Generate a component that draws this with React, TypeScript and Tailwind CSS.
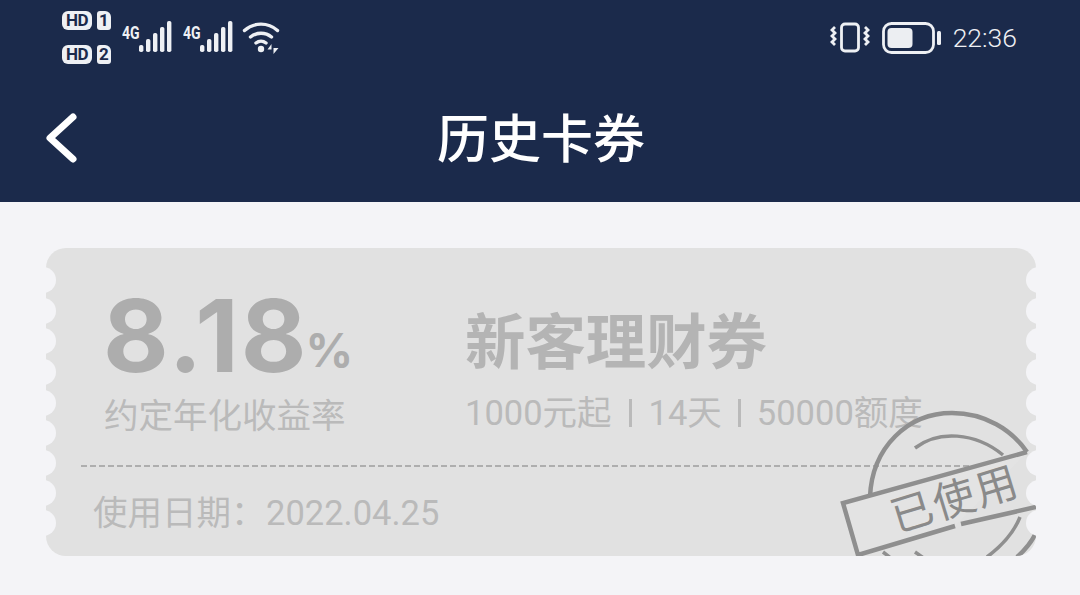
const cjk = "font-['Noto_Sans_CJK_SC','Noto_Sans',sans-serif]";
const scallops = [280, 311, 341, 372, 403, 433, 463, 493, 523];

function Signal() {
  return (
    <div className="relative h-[32px] w-[50px]">
      <span className="absolute left-0 top-[3px] origin-left font-['Roboto',sans-serif] text-[18px] font-bold leading-[18px] text-[#eef0f4] [transform:scaleX(0.78)]">4G</span>
      <svg width="34" height="32" viewBox="0 0 34 32" className="absolute left-[16px] top-0">
        <rect x="1" y="24" width="4.4" height="7" rx="1.8" fill="#eef0f4" />
        <rect x="8" y="18" width="4.4" height="13" rx="1.8" fill="#eef0f4" />
        <rect x="15" y="12" width="4.4" height="19" rx="1.8" fill="#eef0f4" />
        <rect x="22" y="6" width="4.4" height="25" rx="1.8" fill="#eef0f4" />
        <rect x="29" y="0" width="4.4" height="31" rx="1.8" fill="#eef0f4" />
      </svg>
    </div>
  );
}

function Sim({ n }: { n: string }) {
  return (
    <div className="flex items-center gap-[5px] font-['Roboto',sans-serif] text-[17px] font-bold leading-none text-[#1b2a4b]">
      <span className="flex h-[19px] w-[30px] items-center justify-center rounded-[6px] bg-[#eef0f4] tracking-[-0.5px]">HD</span>
      <span className="flex h-[19px] w-[14px] items-center justify-center rounded-[3px] rounded-tr-[6px] bg-[#eef0f4]">{n}</span>
    </div>
  );
}

export default function App() {
  return (
    <div className={`h-[595px] w-[1080px] overflow-hidden bg-[#f4f4f7] ${cjk}`}>
      <header className="flex h-[202px] flex-col bg-[#1b2a4b]">
        <div className="flex h-[76px] items-start justify-between pl-[62px] pr-[63px]">
          <div className="flex items-start pt-[11px]">
            <div className="flex flex-col gap-[15px]">
              <Sim n="1" />
              <Sim n="2" />
            </div>
            <div className="ml-[11px] mt-[10px] flex gap-[11px]">
              <Signal />
              <Signal />
            </div>
            <svg width="40" height="34" viewBox="0 0 40 34" className="ml-[9px] mt-[9px]" fill="none" stroke="#eef0f4" strokeLinecap="round">
              <path d="M2.5 10.5C12 2 26 2 35.5 10.5" strokeWidth="3.4" />
              <path d="M8.5 17C14.5 12 23.5 12 29.5 17" strokeWidth="3.4" />
              <path d="M14 23C17 20.6 21 20.6 24 23" strokeWidth="3.4" />
              <circle cx="19" cy="29" r="3.2" fill="#eef0f4" stroke="none" />
              <path d="M29.5 24l-4 5.5h4zM31.5 24v10l5-6h-5z" fill="#eef0f4" stroke="none" />
            </svg>
          </div>
          <div className="flex items-center pt-[22px]">
            <svg width="40" height="32" viewBox="0 0 40 32" fill="none" stroke="#eef0f4">
              <rect x="11.5" y="2" width="17" height="27" rx="3.5" strokeWidth="2.8" />
              <path d="M5 5l-3 3 3 3-3 3 3 3-3 3 3 3" strokeWidth="2.8" />
              <path d="M35 5l3 3-3 3 3 3-3 3 3 3-3 3" strokeWidth="2.8" />
            </svg>
            <svg width="60" height="32" viewBox="0 0 60 32" fill="none" className="ml-[12px]">
              <rect x="1.5" y="1.5" width="50" height="29" rx="8" stroke="#eef0f4" strokeWidth="2.8" />
              <rect x="5.5" y="6" width="25" height="20" rx="4" fill="#eceef2" />
              <rect x="55" y="9" width="4" height="14" rx="1.5" fill="#eef0f4" />
            </svg>
            <span className="ml-[11px] font-['Roboto',sans-serif] text-[26.5px] font-light leading-none text-[#eef0f4]">22:36</span>
          </div>
        </div>
        <div className="relative flex flex-1 items-start justify-center pt-[27px]">
          <svg width="34" height="52" viewBox="0 0 34 52" className="absolute left-[45px] top-[36px]" fill="none" stroke="#ffffff" strokeWidth="7" strokeLinecap="round" strokeLinejoin="round">
            <path d="M28 5L5 26l23 21" />
          </svg>
          <h1 className="ml-[2px] text-[52px] font-medium leading-[66px] text-white">历史卡券</h1>
        </div>
      </header>

      <main className="px-[46px] pt-[46px]">
        <section className="relative h-[308px] w-[990px] overflow-hidden rounded-[20px] bg-[#e1e1e1] text-[#bababa]">
          <div className="flex h-[217px] items-start pl-[59px] pt-[47px]">
            <div className="w-[360px]">
              <div className="flex h-[80px] items-end font-['Inter',sans-serif] font-bold leading-none text-[#adadad]">
                <span className="-ml-[2px] text-[101px] leading-[80px] tracking-[2px]">8.18</span>
                <span className="mb-[3px] -ml-[3px] text-[47px] leading-[44px]">%</span>
              </div>
              <p className="-ml-[1px] mt-[15px] text-[34.5px] leading-[46px]">约定年化收益率</p>
            </div>
            <div className="pt-[10px]">
              <h2 className="text-[60.4px] font-bold leading-[66px] text-[#b4b4b4]">新客理财券</h2>
              <p className="mt-[19px] flex items-center font-['Roboto','Noto_Sans_CJK_SC',sans-serif] text-[34.5px] leading-[46px]">
                1000元起<span className="mx-[17px] h-[28px] w-[3px] bg-[#bababa]" />14天<span className="mx-[16px] h-[28px] w-[3px] bg-[#bababa]" />50000额度
              </p>
            </div>
          </div>
          <div className="mx-[35px] h-[2px] bg-[repeating-linear-gradient(90deg,#aeaeae_0_6px,transparent_6px_9px)]" />
          <p className="ml-[47px] mt-[23px] flex font-['Roboto','Noto_Sans_CJK_SC',sans-serif] text-[34.5px] leading-[46px]">
            <span className="w-[173px]">使用日期：</span>
            <span>2022.04.25</span>
          </p>

          <svg width="990" height="308" viewBox="46 248 990 308" fill="none" stroke="#8f8f8f" className="absolute left-0 top-0">
            <path d="M870 497C872 447 908 413 952 413C985 413 1012 430 1027 452" strokeWidth="4.5" />
            <path d="M915 448C938 430 975 432 1003 455" strokeWidth="3.5" />
            <path d="M1020 517C1015 530 1003 545 987 557" strokeWidth="3.5" />
            <path d="M1036 533C1032 541 1025 550 1017 557" strokeWidth="4.5" />
            <path d="M883 552L892 559M915 552L925 559" strokeWidth="3.5" />
            <path d="M1027 452L843 503L858 555L955 526M961 524L1036 507" strokeWidth="4.5" fill="#e3e3e3" />
          </svg>
          <span className="absolute left-[842px] top-[222px] rotate-[-17deg] text-[42px] font-normal leading-[52px] tracking-[2px] text-[#8a8a8a]">已使用</span>

          {scallops.map((y) => (
            <div key={`l${y}`} style={{ top: y - 248 - 13 }} className="absolute -left-[16px] h-[26px] w-[26px] rounded-full bg-[#f4f4f7]" />
          ))}
          {scallops.map((y) => (
            <div key={`r${y}`} style={{ top: y - 248 - 13 }} className="absolute -right-[16px] h-[26px] w-[26px] rounded-full bg-[#f4f4f7]" />
          ))}
        </section>
      </main>
    </div>
  );
}
